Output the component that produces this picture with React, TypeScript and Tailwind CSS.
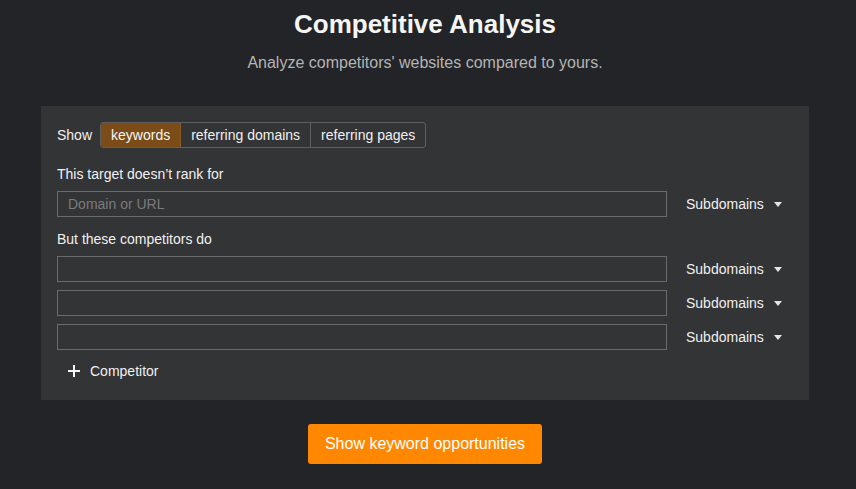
import { useState } from 'react';

const tabs = ['keywords', 'referring domains', 'referring pages'];

function Caret() {
  return (
    <svg width="8" height="5" viewBox="0 0 8 5" className="ml-[10px]">
      <path d="M0 0h8L4 5z" fill="#e6e6e6" />
    </svg>
  );
}

function TargetRow({ placeholder }: { placeholder?: string }) {
  return (
    <div className="flex items-center">
      <input
        placeholder={placeholder}
        className="h-[26px] w-[610px] border border-[#6a6a6a] bg-transparent px-[10px] text-[14px] text-[#e6e6e6] placeholder:text-[#7b7b7b] outline-none"
      />
      <button className="ml-[19px] flex items-center text-[14px] text-[#f0f0f0]">
        Subdomains
        <Caret />
      </button>
    </div>
  );
}

export default function App() {
  const [active, setActive] = useState(0);

  return (
    <div
      className="min-h-[489px] bg-[#232427] text-white"
      style={{ fontFamily: '"Liberation Sans", Arial, sans-serif' }}
    >
      <div className="w-[850px] pt-[8px]">
        <h1 className="text-center text-[26px] font-bold leading-[32px] text-[#f5f5f5]">Competitive Analysis</h1>
        <p className="mt-[13px] text-center text-[16px] leading-[20px] text-[#b4b4b4]">
          Analyze competitors' websites compared to yours.
        </p>

        <div className="mx-[41px] mt-[33px] bg-[#333436] px-[16px] pb-[19px] pt-[16px]">
          <div className="flex items-center">
            <span className="mr-[8px] text-[14px] text-[#f0f0f0]">Show</span>
            <div className="flex h-[26px] overflow-hidden rounded-[3px] border border-[#5f5f5f]">
              {tabs.map((t, i) => (
                <button
                  key={t}
                  onClick={() => setActive(i)}
                  className={
                    i === active
                      ? 'border-r border-[#8a5a20] bg-[#7b4c17] px-[10px] text-[14px] text-[#f5f5f5]'
                      : i === tabs.length - 1
                      ? 'px-[10px] text-[14px] text-[#f0f0f0]'
                      : 'border-r border-[#5f5f5f] px-[10px] text-[14px] text-[#f0f0f0]'
                  }
                >
                  {t}
                </button>
              ))}
            </div>
          </div>

          <div className="mt-[16px] text-[14px] leading-[20px] text-[#f0f0f0]">This target doesn’t rank for</div>
          <div className="mt-[7px]">
            <TargetRow placeholder="Domain or URL" />
          </div>

          <div className="mt-[12px] text-[14px] leading-[20px] text-[#f0f0f0]">But these competitors do</div>
          <div className="mt-[7px] flex flex-col gap-[8px]">
            <TargetRow />
            <TargetRow />
            <TargetRow />
          </div>

          <button className="ml-[11px] mt-[11px] flex h-[20px] items-center text-[14px] text-[#f0f0f0]">
            <svg width="12" height="12" viewBox="0 0 12 12" className="mr-[10px]">
              <path d="M6 0v12M0 6h12" stroke="#f5f5f5" strokeWidth="2" />
            </svg>
            Competitor
          </button>
        </div>

        <div className="mt-[24px] flex justify-center">
          <button className="h-[40px] w-[234px] rounded-[3px] bg-[#ff8800] text-[16px] text-white">
            Show keyword opportunities
          </button>
        </div>
      </div>
    </div>
  );
}
